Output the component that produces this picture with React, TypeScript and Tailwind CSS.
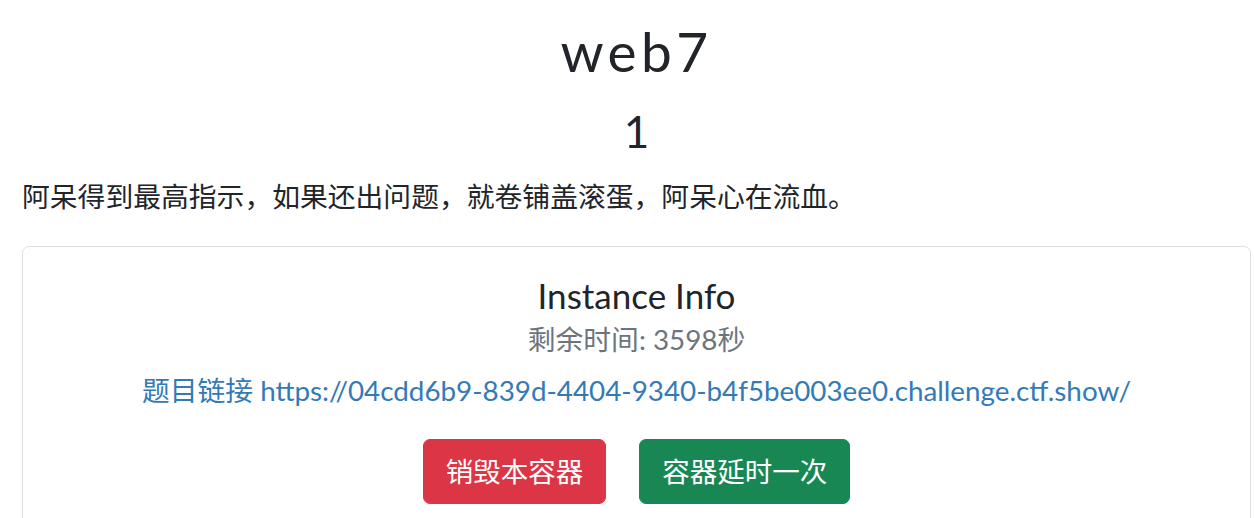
export default function App() {
  return (
    <div
      className="min-h-screen bg-white pl-[22px] pr-[3px] text-[#212529]"
      style={{ fontFamily: 'Lato, "Noto Sans CJK SC", sans-serif' }}
    >
      <h1 className="pt-[18px] text-center text-[55px] leading-[1.2] tracking-[0.08em]">web7</h1>
      <h2 className="mt-[21px] text-center text-[44px] leading-[1.2]">1</h2>
      <p className="mt-[18px] text-[27.8px] leading-[1.5]">
        阿呆得到最高指示，如果还出问题，就卷铺盖滚蛋，阿呆心在流血。
      </p>
      <div className="mt-[29px] rounded-[7px] border border-[#dfdfdf] px-[22px] pt-[27px] pb-[22px] text-center">
        <h3 className="text-[35px] leading-[1.2]">Instance Info</h3>
        <h5 className="mt-[7px] text-[27.8px] leading-[1.2] text-[#6c757d]">剩余时间: 3598秒</h5>
        <p className="mt-[13px] text-[27.8px] leading-[1.5]">
          <a className="text-[#337ab7]" href="#">
            题目链接 https://04cdd6b9-839d-4404-9340-b4f5be003ee0.challenge.ctf.show/
          </a>
        </p>
        <div className="mt-[27px] flex justify-center gap-[33px]">
          <button className="rounded-[7px] border border-[#dc3545] bg-[#dc3545] px-[22px] py-[11px] text-[27.5px] leading-[1.5] text-white">
            销毁本容器
          </button>
          <button className="rounded-[7px] border border-[#198754] bg-[#198754] px-[22px] py-[11px] text-[27.5px] leading-[1.5] text-white">
            容器延时一次
          </button>
        </div>
      </div>
    </div>
  );
}
